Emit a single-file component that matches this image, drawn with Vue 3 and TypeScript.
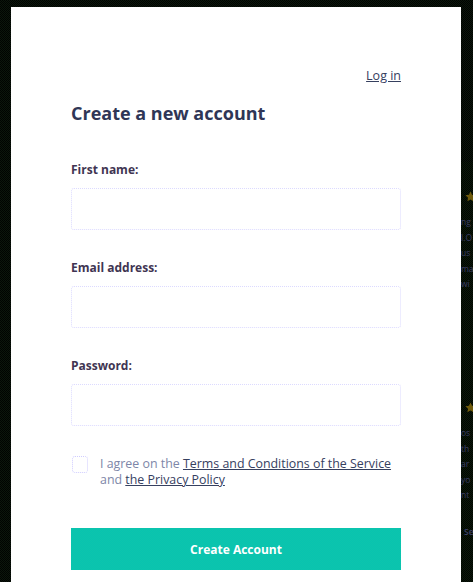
<script setup lang="ts">
interface Field {
  label: string
  type: string
}

const fields: Field[] = [
  { label: 'First name:', type: 'text' },
  { label: 'Email address:', type: 'email' },
  { label: 'Password:', type: 'password' },
]

const topLines = ['ng', 'l.O', 'us', 'ma', 'wi']
const bottomLines = ['os', 'th', 'ar', 'yo', 'nt']
</script>

<template>
  <div class="page">
    <main class="panel">
      <div class="login-row"><a class="link" href="#">Log in</a></div>
      <h1 class="title">Create a new account</h1>
      <form class="form" @submit.prevent>
        <label v-for="field in fields" :key="field.label" class="field">
          <span class="label">{{ field.label }}</span>
          <input class="input" :type="field.type" />
        </label>
        <div class="agree">
          <span class="checkbox"></span>
          <p class="agree-text">
            I agree on the <a class="link" href="#">Terms and Conditions of the Service</a>
            and <a class="link" href="#">the Privacy Policy</a>
          </p>
        </div>
        <button class="submit" type="submit">Create Account</button>
      </form>
    </main>
    <aside class="behind">
      <div class="snippet snippet-top">
        <svg class="star" viewBox="0 0 24 24"><path d="M12 1l3.400 7.200 7.600 1-5.600 5.400 1.400 7.900L12 18.700 5.200 22.500l1.400-7.900L1 9.200l7.600-1z" /></svg>
        <span v-for="line in topLines" :key="line" class="line">{{ line }}</span>
      </div>
      <div class="snippet snippet-bottom">
        <svg class="star" viewBox="0 0 24 24"><path d="M12 1l3.400 7.200 7.600 1-5.600 5.400 1.400 7.900L12 18.700 5.200 22.500l1.400-7.900L1 9.200l7.600-1z" /></svg>
        <span v-for="line in bottomLines" :key="line" class="line">{{ line }}</span>
        <span class="line more">Se</span>
      </div>
    </aside>
  </div>
</template>

<style>
html, body { margin: 0; background: #000; }
</style>

<style scoped>
.page {
  display: flex;
  box-sizing: border-box;
  width: 473px;
  height: 582px;
  padding: 7px 0 0 11px;
  overflow: hidden;
  background-color: #010301;
  background-image: conic-gradient(#0b160b 25%, transparent 0 50%, #0b160b 0 75%, transparent 0);
  background-size: 2px 2px;
  font-family: "Open Sans", "Noto Sans", sans-serif;
}
.panel {
  flex: none;
  box-sizing: border-box;
  width: 450px;
  height: 575px;
  padding: 60px 60px 0;
  background: #fff;
}
.login-row {
  display: flex;
  justify-content: flex-end;
  height: 18px;
  font-size: 12.5px;
  line-height: 18px;
}
.link { color: #36405f; text-decoration: underline; }
.title {
  margin: 15px 0 0;
  color: #2f3656;
  font-size: 18px;
  font-weight: 700;
  line-height: 26px;
}
.form { display: flex; flex-direction: column; margin-top: 35px; }
.field { display: flex; flex-direction: column; margin-bottom: 29px; }
.label {
  color: #3f3552;
  font-size: 12px;
  font-weight: 700;
  line-height: 18px;
  margin-bottom: 9px;
}
.input {
  box-sizing: border-box;
  height: 42px;
  border: 1px dotted #dcdaff;
  border-radius: 3px;
  background: #fff;
  outline: none;
}
.agree { display: flex; gap: 12px; }
.checkbox {
  flex: none;
  box-sizing: border-box;
  width: 16px;
  height: 17px;
  margin: 1px 0 0 1px;
  border: 1px dotted #cfccff;
  border-radius: 3px;
}
.agree-text {
  margin: 1px 0 0;
  color: #7d86a8;
  font-size: 12.4px;
  line-height: 16px;
}
.submit {
  height: 42px;
  margin-top: 40px;
  border: 0;
  background-color: #08c3b0;
  background-image: conic-gradient(#0dc5ac 25%, transparent 0 50%, #0dc5ac 0 75%, transparent 0);
  background-size: 2px 2px;
  color: #fff;
  font-family: inherit;
  font-size: 12px;
  font-weight: 700;
}
.behind {
  position: relative;
  flex: 1;
  min-width: 0;
  overflow: hidden;
  font-size: 8.5px;
  color: #3c3f66;
}
.behind::before {
  content: "";
  position: absolute;
  inset: 155px 0 0;
  background-color: #0a1a08;
  background-image: conic-gradient(#020402 25%, transparent 0 50%, #020402 0 75%, transparent 0);
  background-size: 2px 2px;
}
.snippet { position: absolute; left: 0; display: flex; flex-direction: column; }
.snippet-top { top: 184px; }
.snippet-bottom { top: 395px; }
.star { width: 11px; height: 11px; margin: 0 0 12px 4px; fill: #6e5a0c; }
.line { line-height: 15.5px; white-space: nowrap; }
.more { margin-top: 21px; font-weight: 600; padding-left: 3px; }
</style>
